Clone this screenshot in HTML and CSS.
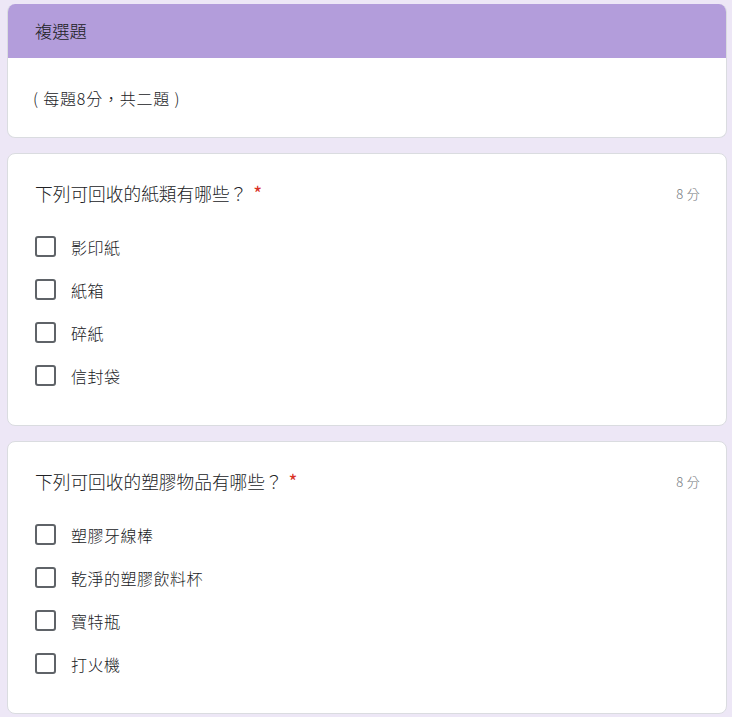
FILE: index.html
```html
<!DOCTYPE html>
<html lang="zh-Hant">
<head>
<meta charset="utf-8">
<title>複選題</title>
<link rel="stylesheet" href="styles.css">
</head>
<body>
<main class="form">
  <section class="card section-card">
    <div class="section-header">複選題</div>
    <div class="section-desc">( 每題8分，共二題 )</div>
  </section>

  <section class="card question">
    <div class="q-head">
      <div class="q-title">下列可回收的紙類有哪些？ <span class="req">*</span></div>
      <div class="q-points">8 分</div>
    </div>
    <ul class="options">
      <li class="option"><span class="box"></span><span class="label">影印紙</span></li>
      <li class="option"><span class="box"></span><span class="label">紙箱</span></li>
      <li class="option"><span class="box"></span><span class="label">碎紙</span></li>
      <li class="option"><span class="box"></span><span class="label">信封袋</span></li>
    </ul>
  </section>

  <section class="card question">
    <div class="q-head">
      <div class="q-title">下列可回收的塑膠物品有哪些？ <span class="req">*</span></div>
      <div class="q-points">8 分</div>
    </div>
    <ul class="options">
      <li class="option"><span class="box"></span><span class="label">塑膠牙線棒</span></li>
      <li class="option"><span class="box"></span><span class="label">乾淨的塑膠飲料杯</span></li>
      <li class="option"><span class="box"></span><span class="label">寶特瓶</span></li>
      <li class="option"><span class="box"></span><span class="label">打火機</span></li>
    </ul>
  </section>
</main>
</body>
</html>
```
FILE: styles.css
```css
html, body {
  margin: 0;
  padding: 0;
}
body {
  background: #ede7f6;
  font-family: "Noto Sans CJK TC", "Noto Sans", "Liberation Sans", sans-serif;
  font-weight: 300;
  color: #202124;
}
.form {
  width: 720px;
  padding: 4px 5px 0 7px;
  display: flex;
  flex-direction: column;
  gap: 15px;
}
.card {
  background: #fff;
  border: 1px solid #dadce0;
  border-radius: 8px;
  overflow: hidden;
}
.section-card {
  border-top: none;
}
.section-header {
  background: #b39ddb;
  height: 54px;
  display: flex;
  align-items: center;
  padding-left: 27px;
  font-size: 17.3px;
  line-height: 24px;
  color: #202124;
}
.section-desc {
  height: 79px;
  display: flex;
  align-items: center;
  padding-left: 25px;
  font-size: 16px;
  letter-spacing: 0.8px;
  color: #202124;
  white-space: pre;
}
.question {
  padding: 27px 26px 28px 27px;
}
.q-head {
  display: flex;
  justify-content: space-between;
  align-items: center;
  height: 24px;
}
.q-title {
  font-size: 17.7px;
  line-height: 24px;
  color: #202124;
}
.req {
  color: #d93025;
  font-size: 19px;
  font-weight: 400;
  margin-left: 2px;
}
.q-points {
  font-size: 13px;
  color: #70757a;
  letter-spacing: 0.3px;
}
.options {
  list-style: none;
  margin: 20px 0 0 0;
  padding: 0;
}
.option {
  height: 43px;
  display: flex;
  align-items: center;
}
.box {
  width: 21px;
  height: 21px;
  box-sizing: border-box;
  border: 2px solid #5f6368;
  border-radius: 3px;
  flex: none;
}
.label {
  margin-left: 15px;
  font-size: 16px;
  letter-spacing: 0.5px;
  line-height: 22px;
  color: #202124;
}
```
